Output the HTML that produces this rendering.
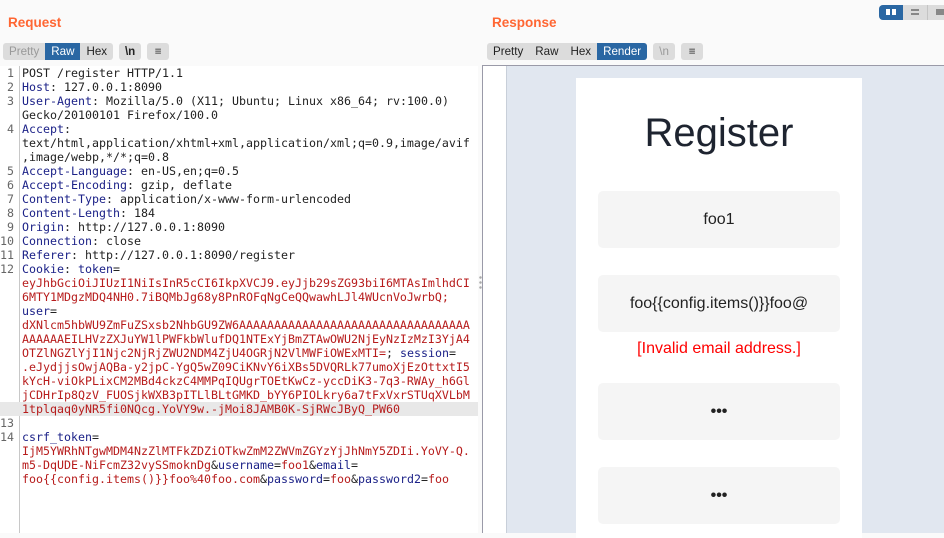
<!DOCTYPE html>
<html><head><meta charset="utf-8"><style>
*{margin:0;padding:0;box-sizing:border-box}
body{width:944px;height:533px;overflow:hidden;background:#fafafa;font-family:"Liberation Sans",sans-serif;position:relative}
.h{position:absolute;top:15px;color:#ff6633;font-weight:bold;font-size:13.5px}
.tb{position:absolute;top:43px;height:17px;display:flex;gap:6px}
.grp{display:flex;background:#dcdcdc;border-radius:3px;overflow:hidden;height:17px}
.grp span{font-size:11.6px;line-height:17px;padding:0 6px;color:#222}
.grp span.ic{width:22px;padding:0;text-align:center}
.grp span.on{background:#2a67a3;color:#fff}
.grp span.dis{color:#999}
.code{position:absolute;left:0;top:66px;width:478px;height:467px;background:#fff}
.gut{position:absolute;left:19px;top:0;width:1px;height:467px;background:#c8c8c8}
pre{position:absolute;left:0;top:0;font-family:"DejaVu Sans Mono",monospace;font-size:11.63px;line-height:14px;color:#222}
.r{display:block;height:14px;white-space:pre}
.n{display:inline-block;width:14px;text-align:right;color:#666;margin-right:8px}
.k{color:#1c2288}.v{color:#b71c1c}
.hl{background:#e8e8e8;width:478px}
.fr{position:absolute;left:482px;top:65px;width:462px;height:468px;border-left:1px solid #9a9aa8;border-top:1px solid #9a9aa8;background:#fff}
.bg{position:absolute;left:23px;top:0;right:0;bottom:0;background:#e1e7f0;border-left:1px solid #c8cfd9}
.card{position:absolute;left:69px;top:12px;width:286px;height:460px;background:#fff}
.card h1{font-weight:normal;font-size:40px;color:#1e2430;text-align:center;margin-top:32px;line-height:46px}
.in{position:absolute;left:22px;width:242px;height:57px;background:#f5f5f5;border-radius:5px;text-align:center;line-height:57px;font-size:16px;color:#222}
.err{position:absolute;left:0;width:286px;text-align:center;color:#f00;font-size:16px;top:262px}
</style></head><body>
<div class="h" style="left:8px">Request</div>
<div class="h" style="left:492px">Response</div>
<div style="position:absolute;left:879px;top:5px;width:70px;height:15px;background:#dcdcdc;border-radius:4px;overflow:hidden">
<div style="position:absolute;left:0;top:0;width:24px;height:15px;background:#2a67a3"></div>
<div style="position:absolute;left:7px;top:4px;width:4px;height:6px;background:#fff"></div><div style="position:absolute;left:13px;top:4px;width:4px;height:6px;background:#fff"></div>
<div style="position:absolute;left:32px;top:4px;width:8px;height:2px;background:#888"></div><div style="position:absolute;left:32px;top:8px;width:8px;height:2px;background:#888"></div>
<div style="position:absolute;left:48px;top:0;width:1px;height:15px;background:#c4c4c4"></div>
<div style="position:absolute;left:57px;top:4px;width:8px;height:6px;background:#888"></div>
</div>
<div class="tb" style="left:3px"><div class="grp"><span class="dis">Pretty</span><span class="on">Raw</span><span>Hex</span></div><div class="grp"><span class="ic" style="font-weight:bold">\n</span></div><div class="grp"><span class="ic">&#8801;</span></div></div>
<div class="tb" style="left:487px"><div class="grp"><span>Pretty</span><span>Raw</span><span>Hex</span><span class="on">Render</span></div><div class="grp"><span class="ic dis">\n</span></div><div class="grp"><span class="ic">&#8801;</span></div></div>
<div class="code"><div class="gut"></div><pre><span class="r"><span class="n">1</span>POST /register HTTP/1.1</span><span class="r"><span class="n">2</span><span class="k">Host</span>: 127.0.0.1:8090</span><span class="r"><span class="n">3</span><span class="k">User-Agent</span>: Mozilla/5.0 (X11; Ubuntu; Linux x86_64; rv:100.0)</span><span class="r"><span class="n"></span>Gecko/20100101 Firefox/100.0</span><span class="r"><span class="n">4</span><span class="k">Accept</span>:</span><span class="r"><span class="n"></span>text/html,application/xhtml+xml,application/xml;q=0.9,image/avif</span><span class="r"><span class="n"></span>,image/webp,*/*;q=0.8</span><span class="r"><span class="n">5</span><span class="k">Accept-Language</span>: en-US,en;q=0.5</span><span class="r"><span class="n">6</span><span class="k">Accept-Encoding</span>: gzip, deflate</span><span class="r"><span class="n">7</span><span class="k">Content-Type</span>: application/x-www-form-urlencoded</span><span class="r"><span class="n">8</span><span class="k">Content-Length</span>: 184</span><span class="r"><span class="n">9</span><span class="k">Origin</span>: http://127.0.0.1:8090</span><span class="r"><span class="n">10</span><span class="k">Connection</span>: close</span><span class="r"><span class="n">11</span><span class="k">Referer</span>: http://127.0.0.1:8090/register</span><span class="r"><span class="n">12</span><span class="k">Cookie</span>: <span class="k">token</span>=</span><span class="r v"><span class="n"></span>eyJhbGciOiJIUzI1NiIsInR5cCI6IkpXVCJ9.eyJjb29sZG93biI6MTAsImlhdCI</span><span class="r v"><span class="n"></span>6MTY1MDgzMDQ4NH0.7iBQMbJg68y8PnROFqNgCeQQwawhLJl4WUcnVoJwrbQ;</span><span class="r"><span class="n"></span><span class="k">user</span>=</span><span class="r v"><span class="n"></span>dXNlcm5hbWU9ZmFuZSxsb2NhbGU9ZW6AAAAAAAAAAAAAAAAAAAAAAAAAAAAAAAAA</span><span class="r v"><span class="n"></span>AAAAAAEILHVzZXJuYW1lPWFkbWlufDQ1NTExYjBmZTAwOWU2NjEyNzIzMzI3YjA4</span><span class="r"><span class="n"></span><span class="v">OTZlNGZlYjI1Njc2NjRjZWU2NDM4ZjU4OGRjN2VlMWFiOWExMTI=</span>; <span class="k">session</span>=</span><span class="r v"><span class="n"></span>.eJydjjsOwjAQBa-y2jpC-YgQ5wZ09CiKNvY6iXBs5DVQRLk77umoXjEzOttxtI5</span><span class="r v"><span class="n"></span>kYcH-viOkPLixCM2MBd4ckzC4MMPqIQUgrTOEtKwCz-yccDiK3-7q3-RWAy_h6Gl</span><span class="r v"><span class="n"></span>jCDHrIp8QzV_FUOSjkWXB3pITLlBLtGMKD_bYY6PIOLkry6a7tFxVxrSTUqXVLbM</span><span class="r v hl"><span class="n"></span>1tplqaq0yNR5fi0NQcg.YoVY9w.-jMoi8JAMB0K-SjRWcJByQ_PW60</span><span class="r"><span class="n">13</span></span><span class="r"><span class="n">14</span><span class="k">csrf_token</span>=</span><span class="r v"><span class="n"></span>IjM5YWRhNTgwMDM4NzZlMTFkZDZiOTkwZmM2ZWVmZGYzYjJhNmY5ZDIi.YoVY-Q.</span><span class="r"><span class="n"></span><span class="v">m5-DqUDE-NiFcmZ32vySSmoknDg</span>&amp;<span class="k">username</span>=<span class="v">foo1</span>&amp;<span class="k">email</span>=</span><span class="r"><span class="n"></span><span class="v">foo{{config.items()}}foo%40foo.com</span>&amp;<span class="k">password</span>=<span class="v">foo</span>&amp;<span class="k">password2</span>=<span class="v">foo</span></span></pre></div>
<div style="position:absolute;left:479px;top:275px;width:3px;height:14px;background:radial-gradient(circle,#aaa 1px,transparent 1.5px) 0 0/3px 5px"></div>
<div class="fr"><div class="bg"><div class="card"><h1>Register</h1>
<div class="in" style="top:113px">foo1</div>
<div class="in" style="top:197px">foo{{config.items()}}foo@</div>
<div class="err">[Invalid email address.]</div>
<div class="in" style="top:305px;font-weight:bold">&#8226;&#8226;&#8226;</div>
<div class="in" style="top:389px;font-weight:bold">&#8226;&#8226;&#8226;</div>
</div></div></div>
</body></html>
